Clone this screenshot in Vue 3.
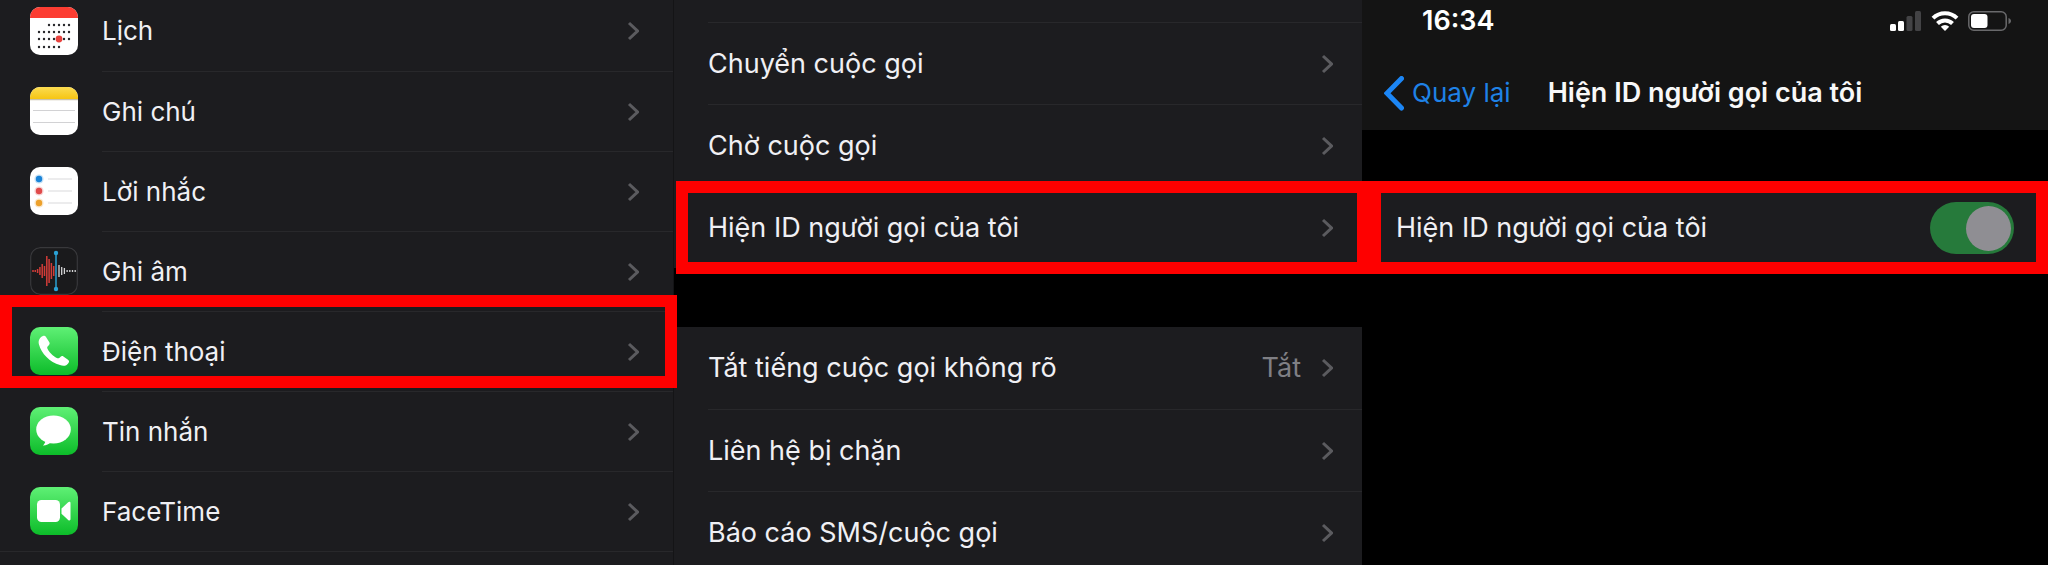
<script setup>
import { ref } from 'vue'

const showCallerId = ref(true)

const apps = [
  { id: 'calendar', label: 'Lịch' },
  { id: 'notes', label: 'Ghi chú' },
  { id: 'reminders', label: 'Lời nhắc' },
  { id: 'voice', label: 'Ghi âm' },
  { id: 'phone', label: 'Điện thoại', marked: true },
  { id: 'messages', label: 'Tin nhắn' },
  { id: 'facetime', label: 'FaceTime' },
]

const callGroups = [
  [
    { label: 'Chuyển cuộc gọi' },
    { label: 'Chờ cuộc gọi' },
    { label: 'Hiện ID người gọi của tôi', marked: true },
  ],
  [
    { label: 'Tắt tiếng cuộc gọi không rõ', value: 'Tắt' },
    { label: 'Liên hệ bị chặn' },
    { label: 'Báo cáo SMS/cuộc gọi' },
  ],
]

// calendar dots: [y, first x, count]
const dotRows = [
  [18, 18, 5],
  [25, 8, 7],
  [32, 8, 7],
  [40, 8, 5],
]

// half heights of the waveform bars
const redBars = [1, 1, 2, 4, 7, 5, 15, 12, 8, 5]
const whiteBars = [6, 4, 3, 1, 1, 1, 1]
</script>

<template>
  <div class="screens">
    <nav class="screen apps">
      <ul class="list">
        <li v-for="app in apps" :key="app.id" class="row" :class="{ marked: app.marked }">
          <a href="#" class="link">
            <svg class="app-icon" viewBox="0 0 48 48" aria-hidden="true">
              <defs>
                <clipPath :id="'clip-' + app.id"><rect width="48" height="48" rx="10" /></clipPath>
                <linearGradient :id="'green-' + app.id" x1="0" y1="0" x2="0" y2="1">
                  <stop offset="0" stop-color="#5ff075" />
                  <stop offset="1" stop-color="#0cbc29" />
                </linearGradient>
                <linearGradient :id="'yellow-' + app.id" x1="0" y1="0" x2="0" y2="1">
                  <stop offset="0" stop-color="#fbdc52" />
                  <stop offset="1" stop-color="#f6c513" />
                </linearGradient>
              </defs>
              <g :clip-path="`url(#clip-${app.id})`">
                <template v-if="app.id === 'calendar'">
                  <rect width="48" height="48" fill="#fff" />
                  <rect width="48" height="11" fill="#fc3d32" />
                  <template v-for="[y, x, count] in dotRows" :key="y">
                    <circle v-for="n in count" :key="n" :cx="x + n * 5 - 4" :cy="y" r="1.2" fill="#26262a" />
                  </template>
                  <circle cx="29" cy="32" r="3.4" fill="#e8423e" />
                </template>
                <template v-else-if="app.id === 'notes'">
                  <rect width="48" height="48" fill="#fff" />
                  <rect width="48" height="12" :fill="`url(#yellow-${app.id})`" />
                  <path d="M0 12.7h48" stroke="#c9c3ad" stroke-width="1.2" />
                  <path d="M3 23.5h42M3 35.5h42" stroke="#d2d2d4" stroke-width="1" />
                </template>
                <template v-else-if="app.id === 'reminders'">
                  <rect width="48" height="48" fill="#fff" />
                  <g fill-opacity="0.25">
                    <circle cx="9" cy="12" r="4.6" fill="#1a84d8" />
                    <circle cx="9" cy="24" r="4.6" fill="#e04a4a" />
                    <circle cx="9" cy="36" r="4.6" fill="#eda12c" />
                  </g>
                  <circle cx="9" cy="12" r="3.2" fill="#1a84d8" />
                  <circle cx="9" cy="24" r="3.2" fill="#e04a4a" />
                  <circle cx="9" cy="36" r="3.2" fill="#eda12c" />
                  <path d="M18 12h24M18 24h24M18 36h24" stroke="#d9d9db" stroke-width="1" />
                </template>
                <template v-else-if="app.id === 'voice'">
                  <rect x="0.7" y="0.7" width="46.6" height="46.6" rx="9.5" fill="#1a1a1c" stroke="#38383b" stroke-width="1.2" />
                  <path
                    v-for="(h, i) in redBars"
                    :key="'r' + i"
                    :d="`M${3 + i * 2.3} ${24 - h}v${h * 2}`"
                    stroke="#d23c38"
                    stroke-width="1.5"
                  />
                  <path
                    v-for="(h, i) in whiteBars"
                    :key="'w' + i"
                    :d="`M${29 + i * 2.7} ${24 - h}v${h * 2}`"
                    stroke="#d6d6d8"
                    stroke-width="1.3"
                  />
                  <path d="M26 6v36" stroke="#2a9fd0" stroke-width="1.5" />
                  <circle cx="26" cy="6" r="2.2" fill="#2aa2d6" />
                  <circle cx="26" cy="42" r="2.2" fill="#2aa2d6" />
                </template>
                <template v-else>
                  <rect width="48" height="48" :fill="`url(#green-${app.id})`" />
                  <path
                    v-if="app.id === 'phone'"
                    fill="#fff"
                    d="M13 9c1.3-.5 2.3-.1 3 1l3.3 5.2c.6 1.1.4 2.1-.5 3-1.6 1.4-2 2.2-1.2 3.9 1.5 3.2 5.6 7.4 9.2 9 1.5.6 2.3.2 3.8-1.4.8-.8 1.800-.9 2.800-.2l4.600 3.200c1.200.9 1.400 1.900.5 3.200-2 2.900-4.700 3.500-8.500 2.200C19.800 35.200 11.300 26.600 8.900 17.300 8 13.500 9.700 10.400 13 9z"
                  />
                  <template v-else-if="app.id === 'messages'">
                    <ellipse cx="23.5" cy="22.5" rx="17.3" ry="14" fill="#fff" />
                    <path d="M15.5 33c.1 2.300-1 4.200-2.700 5.500 3.300.1 6.200-1.200 8.200-3.500z" fill="#fff" />
                  </template>
                  <template v-else>
                    <rect x="7" y="13" width="23" height="22" rx="4.5" fill="#fff" />
                    <path d="M31.5 21.500l6.700-6.300c1-.9 2.300-.6 2.300.9v16c0 1.500-1.300 1.800-2.300.9l-6.700-6.300z" fill="#fff" />
                  </template>
                </template>
              </g>
            </svg>
            <span class="cell">
              <span class="label">{{ app.label }}</span>
              <svg class="chevron" viewBox="0 0 12 20" aria-hidden="true"><path d="M2 2l8.5 8L2 18" /></svg>
            </span>
          </a>
        </li>
      </ul>
    </nav>

    <section class="screen calls">
      <ul v-for="(group, g) in callGroups" :key="g" class="list">
        <li v-for="item in group" :key="item.label" class="row" :class="{ marked: item.marked }">
          <a href="#" class="link">
            <span class="cell">
              <span class="label">{{ item.label }}</span>
              <span v-if="item.value" class="value">{{ item.value }}</span>
              <svg class="chevron" viewBox="0 0 12 20" aria-hidden="true"><path d="M2 2l8.5 8L2 18" /></svg>
            </span>
          </a>
        </li>
      </ul>
    </section>

    <main class="screen caller">
      <header class="top">
        <div class="status">
          <span class="time">16:34</span>
          <svg class="signal" viewBox="0 0 31 20" aria-hidden="true">
            <rect x="0" y="13" width="6" height="7" rx="1.5" fill="#fff" />
            <rect x="8" y="10" width="6" height="10" rx="1.5" fill="#fff" />
            <rect x="16.5" y="5" width="6" height="15" rx="1.5" fill="#434345" />
            <rect x="25" y="0" width="6" height="20" rx="1.5" fill="#434345" />
          </svg>
          <svg class="wifi" viewBox="0 0 28 20" aria-hidden="true">
            <path d="M2 7.2a17 17 0 0 1 24 0" />
            <path d="M6.500 12.500a10.600 10.600 0 0 1 15 0" />
            <path class="wifi-dot" d="M14 20l-4.200-4.200a6 6 0 0 1 8.400 0z" />
          </svg>
          <svg class="battery" viewBox="0 0 44 20" aria-hidden="true">
            <rect x="0.8" y="0.8" width="37.4" height="18.4" rx="5" fill="none" stroke="#69696b" stroke-width="1.5" />
            <rect x="3" y="3" width="16.5" height="14" rx="3" fill="#fff" />
            <path d="M40.500 7v6c1.500-.5 2.500-1.600 2.500-3s-1-2.500-2.500-3z" fill="#69696b" />
          </svg>
        </div>
        <div class="navbar">
          <a href="#" class="back">
            <svg class="back-icon" viewBox="0 0 20 35" aria-hidden="true"><path d="M17.500 2.500L3 17.200l14.500 14.800" /></svg>
            <span>Quay lại</span>
          </a>
          <h1 class="title">Hiện ID người gọi của tôi</h1>
        </div>
      </header>
      <div class="row marked">
        <label class="link" for="caller-id">
          <span class="cell">
            <span class="label">Hiện ID người gọi của tôi</span>
            <input id="caller-id" v-model="showCallerId" class="switch" type="checkbox" role="switch" />
          </span>
        </label>
      </div>
    </main>
  </div>
</template>

<style>
body {
  margin: 0;
  background: #000;
}
</style>

<style scoped>
.screens {
  display: grid;
  grid-template-columns: 674fr 688fr 686fr;
  height: 100vh;
  overflow: hidden;
  background: #000;
  color: #f0f0f4;
  font-family: Inter, 'Liberation Sans', sans-serif;
  font-size: 27px;
  line-height: 36px;
}

.screen {
  min-width: 0;
}

.list {
  list-style: none;
  margin: 0;
  padding: 0;
  background: #1c1c1f;
}

.row {
  position: relative;
  background: #1c1c1f;
}

.link {
  display: flex;
  align-items: center;
  height: 82px;
  color: inherit;
  text-decoration: none;
}

.cell {
  flex: 1;
  display: flex;
  align-items: center;
  box-sizing: border-box;
  height: 100%;
  min-width: 0;
}

.row + .row .cell {
  border-top: 1px solid #28282b;
}

.label {
  flex: 1;
  white-space: nowrap;
}

.value {
  margin-right: 20px;
  color: #7f7f84;
}

.chevron {
  width: 12px;
  height: 20px;
  fill: none;
  stroke: #5b5b5f;
  stroke-width: 3;
}

/* red frame round the step to tap */
.marked::after {
  content: '';
  position: absolute;
  z-index: 1;
  inset: -5px -7px -6px 2px;
  border: 12px solid #fe0000;
  pointer-events: none;
}

/* app list, scrolled a little */
.apps {
  background: #1c1c1f;
  border-right: 1px solid #141416;
  font-size: 26px;
}

.apps .list {
  margin-top: -9px;
  border-bottom: 1px solid #28282b;
}

.apps .link {
  height: 80px;
  padding-left: 30px;
  gap: 24px;
}

.apps .cell {
  padding-right: 34px;
}

.apps .marked::after {
  inset: -16px -4px 3px 0;
}

.app-icon {
  width: 48px;
  height: 48px;
}

/* call settings */
.calls .list {
  margin-bottom: 59px;
}

.calls .list:first-child {
  padding-top: 22px;
}

.calls .link {
  padding-left: 34px;
}

.calls .cell {
  padding-right: 29px;
}

.calls .list:first-child .cell {
  border-top: 1px solid #28282b;
}

/* caller id */
.top {
  box-sizing: border-box;
  height: 130px;
  margin-bottom: 57px;
  background: #141414;
}

.status {
  display: flex;
  align-items: center;
  height: 42px;
  padding: 0 36px 0 60px;
}

.time {
  flex: 1;
  color: #fff;
  font-weight: 600;
}

.signal {
  width: 31px;
  height: 20px;
}

.wifi {
  width: 28px;
  height: 20px;
  margin: 0 9px 0 10px;
  fill: none;
  stroke: #fff;
  stroke-width: 4;
}

.wifi-dot {
  fill: #fff;
  stroke: none;
}

.battery {
  width: 44px;
  height: 20px;
}

.navbar {
  display: grid;
  grid-template-columns: 1fr auto 1fr;
  align-items: center;
  height: 102px;
  padding: 0 22px;
}

.back {
  display: flex;
  align-items: center;
  gap: 8px;
  color: #1f82e6;
  font-size: 26px;
  text-decoration: none;
  white-space: nowrap;
}

.back-icon {
  width: 20px;
  height: 35px;
  fill: none;
  stroke: #1c86f5;
  stroke-width: 5;
  stroke-linecap: round;
}

.title {
  margin: 0;
  color: #f8f8f8;
  font-size: 27px;
  font-weight: 600;
  white-space: nowrap;
}

.caller .link {
  padding: 0 34px;
}

.caller .marked::after {
  inset: -6px 0 -5px 7px;
}

.switch {
  appearance: none;
  display: flex;
  align-items: center;
  box-sizing: border-box;
  width: 84px;
  height: 52px;
  margin: 0;
  padding: 0 3px;
  border-radius: 26px;
  background: #39393d;
}

.switch::before {
  content: '';
  width: 45px;
  height: 45px;
  border-radius: 50%;
  background: #8f8e93;
}

.switch:checked {
  justify-content: flex-end;
  background: #267a3b;
}
</style>
